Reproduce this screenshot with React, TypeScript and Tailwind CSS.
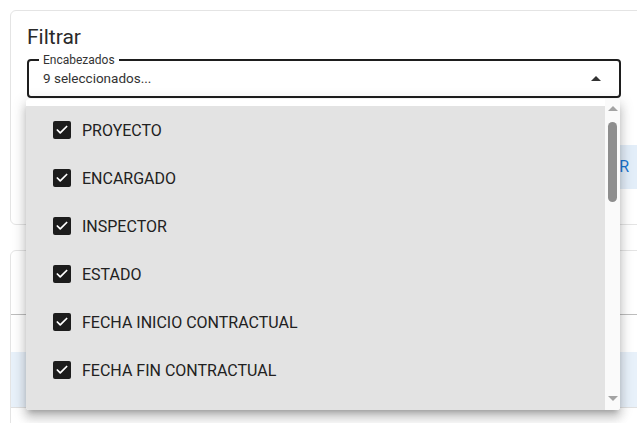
import { Check } from "lucide-react";

const items = [
  "PROYECTO",
  "ENCARGADO",
  "INSPECTOR",
  "ESTADO",
  "FECHA INICIO CONTRACTUAL",
  "FECHA FIN CONTRACTUAL",
];

const CheckBox = () => (
  <span className="flex h-[18px] w-[18px] items-center justify-center rounded-[2px] bg-[#1c1c1c]">
    <Check className="h-[14px] w-[14px] text-white" strokeWidth={3} />
  </span>
);

export default function App() {
  return (
    <div
      className="relative h-[423px] w-[637px] overflow-hidden bg-white text-[#212121]"
      style={{ fontFamily: "Roboto, 'Liberation Sans', sans-serif" }}
    >
      <div className="w-[700px] pl-[10px] pt-[10px]">
        {/* filter card */}
        <div className="h-[215px] rounded-[6px] border border-[#e4e4e4] px-4 pt-[12px]">
          <h2 className="text-[21px] leading-[28px] text-[#2a2a2a]">Filtrar</h2>
          <div className="relative mt-[8px] h-[39px] w-[594px] rounded-[4px] border-2 border-[#1e1e1e]">
            <span className="absolute -top-[9px] left-[10px] bg-white px-[4px] text-[12px] leading-[16px] text-[#333]">
              Encabezados
            </span>
            <div className="flex h-full items-center justify-between pl-[14px] pr-[18px]">
              <span className="text-[13.5px] text-[#333]">9 seleccionados...</span>
              <span className="h-0 w-0 border-x-[5px] border-b-[5px] border-x-transparent border-b-[#333]" />
            </div>
          </div>
          <div className="mt-[47px] flex justify-end">
            <div className="flex h-[44px] w-[160px] items-center justify-end bg-[#e3eef9] pr-[54px] text-[16px] text-[#1976d2]">
              FILTRAR
            </div>
          </div>
        </div>

        {/* table card */}
        <div className="mt-[25px] h-[200px] rounded-[6px] border border-[#e4e4e4]">
          <div className="h-[63px]" />
          <div className="h-[38px] border-t border-[#bdbdbd]" />
          <div className="h-[56px] border-b border-[#e0e0e0] bg-[#e8f1fa]" />
        </div>
      </div>

      {/* dropdown menu */}
      <div className="absolute left-[26px] top-[99px] flex h-[311px] w-[594px] overflow-hidden rounded-[3px] bg-white shadow-[0_5px_5px_-3px_rgba(0,0,0,0.2),0_8px_10px_1px_rgba(0,0,0,0.14),0_3px_14px_2px_rgba(0,0,0,0.12)]">
        <div className="flex-1 pt-[7px]">
          <ul className="h-full bg-[#e3e3e3]">
            {items.map((label) => (
              <li key={label} className="flex h-[48px] items-center gap-[11px] pl-[27px]">
                <CheckBox />
                <span className="pt-[2px] text-[16px] text-[#212121]">{label}</span>
              </li>
            ))}
          </ul>
        </div>
        <div className="relative w-[15px] bg-[#fafafa]">
          <span className="absolute left-[3px] top-[7px] h-0 w-0 border-x-[5px] border-b-[5px] border-x-transparent border-b-[#a3a3a3]" />
          <span className="absolute left-[3px] top-[23px] h-[80px] w-[9px] rounded-full bg-[#8e8e8e]" />
          <span className="absolute bottom-[9px] left-[3px] h-0 w-0 border-x-[5px] border-t-[5px] border-x-transparent border-t-[#a3a3a3]" />
        </div>
      </div>
    </div>
  );
}
